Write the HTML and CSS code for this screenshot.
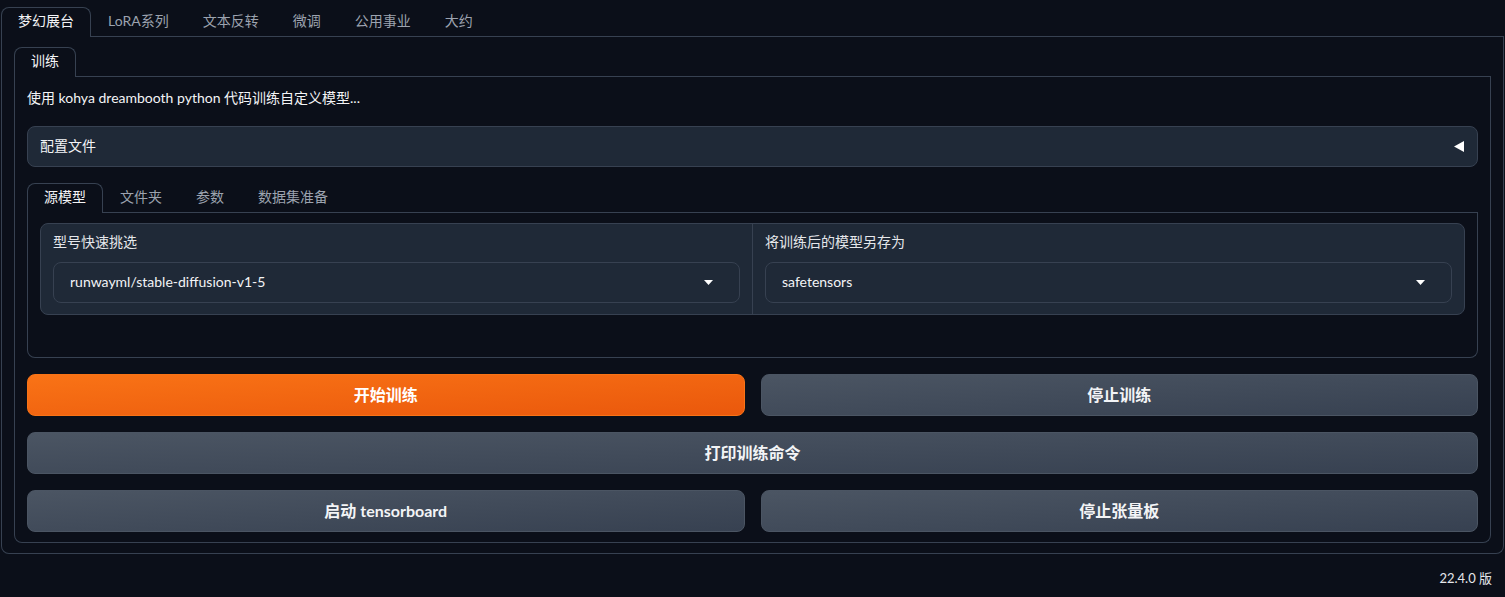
FILE: index.html
```html
<!DOCTYPE html>
<html>
<head>
  <meta charset="utf-8" />
  <title>Kohya</title>
<link rel="stylesheet" href="styles.css">
</head>
<body>
<div class="app">
  <div class="tabs">
    <div class="tab_nav">
      <span class="tab selected">梦幻展台</span>
      <span class="tab">LoRA系列</span>
      <span class="tab">文本反转</span>
      <span class="tab">微调</span>
      <span class="tab">公用事业</span>
      <span class="tab">大约</span>
    </div>
    <div class="tab_item outer">
      <div class="tabs">
        <div class="tab_nav">
          <span class="tab selected">训练</span>
        </div>
        <div class="tab_item column">
          <div class="markdown">使用 kohya dreambooth python 代码训练自定义模型...</div>
          <div class="accordion">
            <span>配置文件</span>
            <svg class="tri_left" width="10" height="11" viewBox="0 0 10 11"><path d="M0 5.5L10 0V11Z" fill="#fff"/></svg>
          </div>
          <div class="tabs">
            <div class="tab_nav">
              <span class="tab selected">源模型</span>
              <span class="tab">文件夹</span>
              <span class="tab">参数</span>
              <span class="tab">数据集准备</span>
            </div>
            <div class="tab_item source">
              <div class="block row">
                <div class="field">
                  <label>型号快速挑选</label>
                  <div class="dropdown">
                    <span>runwayml/stable-diffusion-v1-5</span>
                    <svg width="9" height="5" viewBox="0 0 9 5"><path d="M0 0H9L4.5 5Z" fill="#fff"/></svg>
                  </div>
                </div>
                <div class="field">
                  <label>将训练后的模型另存为</label>
                  <div class="dropdown">
                    <span>safetensors</span>
                    <svg width="9" height="5" viewBox="0 0 9 5"><path d="M0 0H9L4.5 5Z" fill="#fff"/></svg>
                  </div>
                </div>
              </div>
            </div>
          </div>
          <div class="btn_row">
            <button class="btn primary">开始训练</button>
            <button class="btn">停止训练</button>
          </div>
          <div class="btn_row">
            <button class="btn">打印训练命令</button>
          </div>
          <div class="btn_row">
            <button class="btn">启动 tensorboard</button>
            <button class="btn">停止张量板</button>
          </div>
        </div>
      </div>
    </div>
  </div>
  <div class="footer">22.4.0 版</div>
</div>
</body>
</html>
```

FILE: styles.css
```css
* {
  margin: 0;
  padding: 0;
  box-sizing: border-box;
  font-family: Lato, "Noto Sans CJK SC", sans-serif;
}
:root {
  --bg-color: #0b0f19;
  --block-color: #1f2937;
  --border-color: #374151;
  --text-color: #f3f4f6;
  --label-color: #e5e7eb;
  --muted-color: #9ca3af;
}
body {
  background-color: var(--bg-color);
  color: var(--text-color);
  font-size: 14px;
}
div.app {
  padding: 7px 1px 0 1px;
}
div.tab_nav {
  display: flex;
  border-bottom: 1px solid var(--border-color);
}
span.tab {
  padding: 3px 16px 5px 16px;
  line-height: 20px;
  color: var(--muted-color);
  border: 1px solid transparent;
  border-bottom: none;
  border-radius: 8px 8px 0 0;
}
span.tab.selected {
  color: var(--text-color);
  background: var(--bg-color);
  border-color: var(--border-color);
  margin-bottom: -1px;
  padding-bottom: 6px;
}
div.tab_item {
  border: 1px solid var(--border-color);
  border-top: none;
  border-radius: 0 0 8px 8px;
  padding: 10px 12px;
}
div.tab_item.column {
  display: flex;
  flex-direction: column;
  gap: 16px;
  padding-top: 12px;
}
div.tab_item.source {
  padding: 10px 12px 42px 12px;
}
div.markdown {
  line-height: 21px;
  margin-top: -2px;
  padding-bottom: 2px;
  color: var(--text-color);
}
div.accordion {
  display: flex;
  align-items: center;
  justify-content: space-between;
  background: var(--block-color);
  border: 1px solid var(--border-color);
  border-radius: 8px;
  padding: 9px 13px 9px 12px;
  line-height: 20px;
}
div.accordion span {
  padding-bottom: 1px;
}
div.block {
  background: var(--block-color);
  border: 1px solid var(--border-color);
  border-radius: 8px;
}
div.block.row {
  display: flex;
}
div.field {
  flex: 1;
  padding: 10px 12px 11px 12px;
  display: flex;
  flex-direction: column;
  gap: 8px;
}
div.field + div.field {
  border-left: 1px solid var(--border-color);
}
div.field label {
  line-height: 20px;
  margin-top: -2px;
  padding-bottom: 2px;
  color: var(--label-color);
}
div.dropdown {
  display: flex;
  align-items: center;
  justify-content: space-between;
  height: 41px;
  padding: 0 26px 0 16px;
  border: 1px solid var(--border-color);
  border-radius: 8px;
  background: var(--block-color);
  color: var(--text-color);
}
div.dropdown span {
  padding-bottom: 3px;
}
div.btn_row {
  display: flex;
  gap: 16px;
}
button.btn {
  flex: 1;
  height: 42px;
  padding-bottom: 2px;
  border: 1px solid #4b5563;
  border-radius: 8px;
  background: linear-gradient(to bottom right, #4b5563, #374151);
  color: var(--text-color);
  font-size: 16px;
  font-weight: 700;
}
button.btn.primary {
  border-color: #f97316;
  background: linear-gradient(to bottom right, #f97316, #ea580c);
  color: #fff;
}
div.footer {
  text-align: right;
  padding: 14px 12px 0 0;
  font-size: 13px;
  line-height: 20px;
  color: var(--label-color);
}
```
